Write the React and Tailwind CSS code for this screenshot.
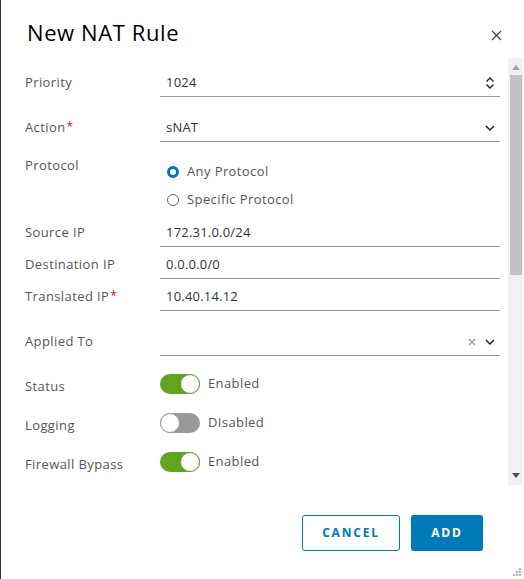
import React from 'react';

const Chevron = () => (
  <svg width="10" height="6" viewBox="0 0 10 6" className="text-[#1a1a1a]">
    <path d="M1 1l4 4 4-4" fill="none" stroke="currentColor" strokeWidth="1.4" />
  </svg>
);

const Field = ({ label, required, value, right, className = '' }) => (
  <div className={`flex ${className}`}>
    <div className="w-[135px] flex items-center text-[13px] tracking-[0.4px] text-[#565656]">
      {label}
      {required && <span className="text-[#c92100] ml-[1px] text-[12px] -mt-[3px]">*</span>}
    </div>
    <div className="flex-1 mr-[8px] h-[28px] border-b border-[#9a9a9a] flex items-center pl-[6px] pr-[5px] text-[13px] tracking-[0.2px] text-[#333]">
      <span className="flex-1">{value}</span>
      {right}
    </div>
  </div>
);

const Toggle = ({ on }) =>
  on ? (
    <div className="w-[40px] h-[20px] rounded-full bg-[#62a420] relative">
      <div className="absolute right-0 top-0 w-[20px] h-[20px] rounded-full bg-white border border-[#62a420]" />
    </div>
  ) : (
    <div className="w-[40px] h-[20px] rounded-full bg-[#9a9a9a] relative">
      <div className="absolute left-0 top-0 w-[20px] h-[20px] rounded-full bg-white border border-[#9a9a9a]" />
    </div>
  );

const SwitchRow = ({ label, on, className = '' }) => (
  <div className={`flex items-center h-[24px] ${className}`}>
    <div className="w-[135px] text-[13px] tracking-[0.4px] text-[#565656] mt-[5px]">{label}</div>
    <Toggle on={on} />
    <span className="ml-[8px] text-[13px] tracking-[0.4px] text-[#565656]">{on ? 'Enabled' : 'DIsabled'}</span>
  </div>
);

export default function App() {
  return (
    <div
      className="w-[524px] h-[579px] bg-white border-l border-[#333] flex flex-col relative"
      style={{ fontFamily: '"Open Sans", Lato, sans-serif' }}
    >
      {/* header */}
      <div className="h-[58px] flex items-center pl-[26px] pr-[22px] shrink-0">
        <h2 className="flex-1 text-[22px] tracking-[0.6px] text-black pt-[6px]">New NAT Rule</h2>
        <svg width="11" height="11" viewBox="0 0 11 11" className="mt-[12px]">
          <path d="M1 1l9 9M10 1l-9 9" stroke="#3a4a5a" strokeWidth="1.2" />
        </svg>
      </div>

      {/* body */}
      <div className="flex h-[427px] shrink-0">
        <div className="flex-1 pl-[24px] overflow-hidden">
          <Field
            className="mt-[11px]"
            label="Priority"
            value="1024"
            right={
              <svg width="10" height="12" viewBox="0 0 10 12">
                <path d="M1.5 4.5L5 1l3.5 3.5M1.5 7.5L5 11l3.5-3.5" fill="none" stroke="#1a1a1a" strokeWidth="1.3" />
              </svg>
            }
          />
          <Field className="mt-[17px]" label="Action" required value="sNAT" right={<Chevron />} />

          <div className="flex mt-[13px]">
            <div className="w-[135px] text-[13px] tracking-[0.4px] leading-[20px] text-[#565656]">Protocol</div>
            <div className="pt-[3px] pl-[7px]">
              <div className="h-[28px] flex items-center gap-[8px] text-[13px] tracking-[0.4px] text-[#565656]">
                <span className="w-[12px] h-[12px] rounded-full border-[3.5px] border-[#0079b8] bg-white" />
                Any Protocol
              </div>
              <div className="h-[28px] flex items-center gap-[8px] text-[13px] tracking-[0.4px] text-[#565656]">
                <span className="w-[12px] h-[12px] rounded-full border border-[#6a6a6a] bg-white" />
                Specific Protocol
              </div>
            </div>
          </div>

          <Field className="mt-[5px]" label="Source IP" value="172.31.0.0/24" />
          <Field className="mt-[4px]" label="Destination IP" value="0.0.0.0/0" />
          <Field className="mt-[4px]" label="Translated IP" required value="10.40.14.12" />
          <Field
            className="mt-[17px]"
            label="Applied To"
            value=""
            right={
              <div className="flex items-center gap-[9px]">
                <svg width="8" height="8" viewBox="0 0 8 8">
                  <path d="M1 1l6 6M7 1L1 7" stroke="#a8a8a8" strokeWidth="1.6" />
                </svg>
                <Chevron />
              </div>
            }
          />

          <SwitchRow className="mt-[16px]" label="Status" on />
          <SwitchRow className="mt-[15px]" label="Logging" on={false} />
          <SwitchRow className="mt-[15px]" label="Firewall Bypass" on />
        </div>

        {/* scrollbar */}
        <div className="w-[15px] mr-[1px] bg-[#f1f1f1] flex flex-col items-center">
          <svg width="8" height="5" viewBox="0 0 8 5" className="mt-[7px]">
            <path d="M0 5L4 0l4 5z" fill="#a3a3a3" />
          </svg>
          <div className="w-[12px] h-[200px] bg-[#c1c1c1] mt-[5px]" />
          <div className="flex-1" />
          <svg width="8" height="5" viewBox="0 0 8 5" className="mb-[7px]">
            <path d="M0 0h8L4 5z" fill="#505050" />
          </svg>
        </div>
      </div>

      {/* footer */}
      <div className="flex justify-end pr-[41px] pt-[30px] gap-[11px]">
        <button className="w-[98px] h-[36px] rounded-[3px] border border-[#0079b8] text-[#0079b8] text-[12px] font-bold tracking-[1.8px]">
          CANCEL
        </button>
        <button className="w-[72px] h-[36px] rounded-[3px] bg-[#0079b8] text-white text-[12px] font-bold tracking-[1.8px]">
          ADD
        </button>
      </div>

      {/* resize grip */}
      <svg width="9" height="9" viewBox="0 0 9 9" className="absolute right-[2px] bottom-[2px]">
        <rect x="6" y="0" width="2" height="2" fill="#b0b0b0" />
        <rect x="3" y="3" width="2" height="2" fill="#b0b0b0" />
        <rect x="6" y="3" width="2" height="2" fill="#b0b0b0" />
        <rect x="0" y="6" width="2" height="2" fill="#b0b0b0" />
        <rect x="3" y="6" width="2" height="2" fill="#b0b0b0" />
        <rect x="6" y="6" width="2" height="2" fill="#b0b0b0" />
      </svg>
    </div>
  );
}
